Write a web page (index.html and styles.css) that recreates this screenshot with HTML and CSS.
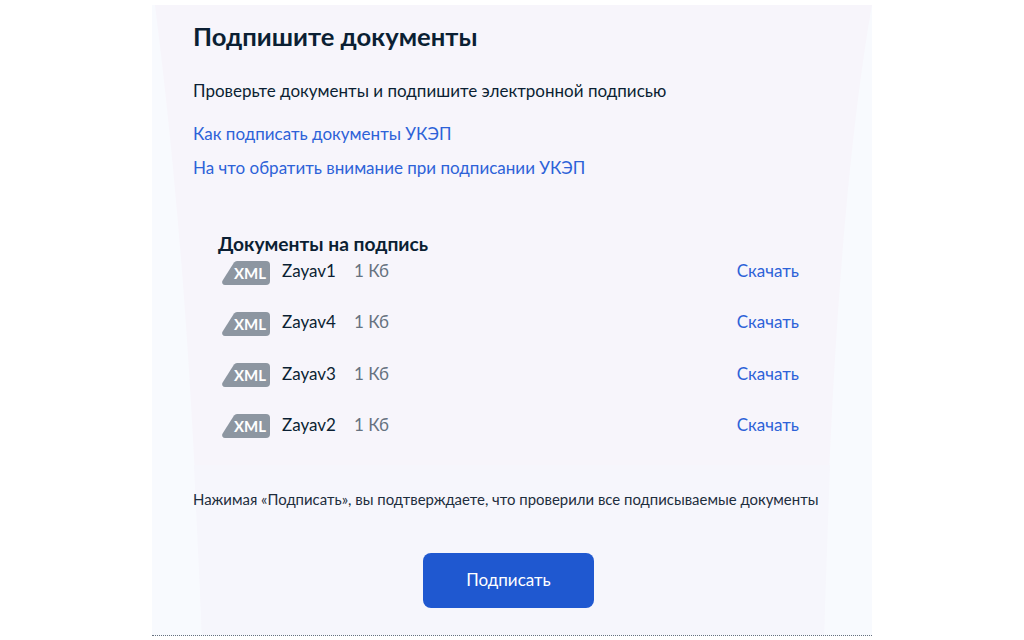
FILE: index.html
```html
<!DOCTYPE html>
<html lang="ru">
<head>
<meta charset="utf-8">
<title>Подпишите документы</title>
<link rel="stylesheet" href="styles.css">
</head>
<body>
<main class="panel">
  <svg class="backdrop" viewBox="0 0 720 630" preserveAspectRatio="none" aria-hidden="true">
    <path class="shape" d="M3 0 C18 120 38 300 50 630 L672 630 C676 430 690 170 720 0 Z"/>
    <path class="shape-low" d="M42 460 L50 630 L672 630 L678 460 Z"/>
  </svg>
  <h1 class="title">Подпишите документы</h1>
  <p class="lead">Проверьте документы и подпишите электронной подписью</p>
  <a class="link link-first">Как подписать документы УКЭП</a>
  <a class="link link-second">На что обратить внимание при подписании УКЭП</a>
  <section class="docs">
    <h2 class="docs-title">Документы на подпись</h2>
    <ul class="doc-list">
      <li class="doc">
        <svg class="badge" viewBox="0 0 48 24"><path d="M15 0H44a4 4 0 0 1 4 4V20a4 4 0 0 1-4 4H3a3 3 0 0 1-2.4-4.6L12 1.5A4 4 0 0 1 15 0Z"/><text x="28" y="17.5">XML</text></svg>
        <span class="doc-name">Zayav1</span><span class="doc-size">1 Кб</span><a class="doc-get">Скачать</a>
      </li>
      <li class="doc">
        <svg class="badge" viewBox="0 0 48 24"><path d="M15 0H44a4 4 0 0 1 4 4V20a4 4 0 0 1-4 4H3a3 3 0 0 1-2.4-4.6L12 1.5A4 4 0 0 1 15 0Z"/><text x="28" y="17.5">XML</text></svg>
        <span class="doc-name">Zayav4</span><span class="doc-size">1 Кб</span><a class="doc-get">Скачать</a>
      </li>
      <li class="doc">
        <svg class="badge" viewBox="0 0 48 24"><path d="M15 0H44a4 4 0 0 1 4 4V20a4 4 0 0 1-4 4H3a3 3 0 0 1-2.4-4.6L12 1.5A4 4 0 0 1 15 0Z"/><text x="28" y="17.5">XML</text></svg>
        <span class="doc-name">Zayav3</span><span class="doc-size">1 Кб</span><a class="doc-get">Скачать</a>
      </li>
      <li class="doc">
        <svg class="badge" viewBox="0 0 48 24"><path d="M15 0H44a4 4 0 0 1 4 4V20a4 4 0 0 1-4 4H3a3 3 0 0 1-2.4-4.6L12 1.5A4 4 0 0 1 15 0Z"/><text x="28" y="17.5">XML</text></svg>
        <span class="doc-name">Zayav2</span><span class="doc-size">1 Кб</span><a class="doc-get">Скачать</a>
      </li>
    </ul>
  </section>
  <p class="note">Нажимая «Подписать», вы подтверждаете, что проверили все подписываемые документы</p>
  <div class="actions"><button class="sign" type="button">Подписать</button></div>
</main>
</body>
</html>
```
FILE: styles.css
```css
* { box-sizing: border-box; }
html, body { margin: 0; height: 640px; overflow: hidden; background: #fff; }
body { padding-top: 5px; font-family: Lato, "Noto Sans", sans-serif; color: #0b1f33; }
.panel {
  position: relative;
  width: 720px;
  height: 631px;
  margin: 0 auto;
  padding: 15px 41px 0;
  background: #f8fafe;
  border-bottom: 1px dotted #66727f;
  display: flex;
  flex-direction: column;
  align-items: flex-start;
}
.backdrop { position: absolute; left: 0; top: 0; width: 720px; height: 630px; }
.shape { fill: #f7f5fb; }
.shape-low { fill: #f6f6fc; }
.title, .lead, .link, .docs, .note, .actions { position: relative; }
.title { margin: 0; font-size: 25.6px; line-height: 32px; font-weight: 700; }
.lead { margin: 27px 0 0; font-size: 17px; line-height: 24px; }
.link { color: #2d62d8; font-size: 17px; line-height: 24px; }
.link-first { margin-top: 19px; }
.link-second { margin-top: 10px; }
.docs { width: 100%; margin-top: 52px; padding-left: 25px; }
.docs-title { margin: 0; font-size: 19.2px; line-height: 24px; font-weight: 700; }
.doc-list { list-style: none; margin: 3px 0 0; padding: 0; display: flex; flex-direction: column; gap: 27.3px; }
.doc { display: flex; align-items: center; height: 24px; font-size: 17px; line-height: 24px; }
.badge { width: 48px; height: 24px; margin: 3px 0 0 4px; flex: none; }
.badge path { fill: #8d96a1; }
.badge text { fill: #fff; font-family: Lato, sans-serif; font-size: 15px; font-weight: 700; text-anchor: middle; }
.doc-name { margin-left: 12px; width: 72px; }
.doc-size { color: #66727f; }
.doc-get { margin-left: auto; margin-right: 32px; color: #2d62d8; }
.note { margin: 52px 0 0; font-size: 14.93px; line-height: 20px; color: #1d2d3d; }
.actions { width: 100%; margin-top: 44px; display: flex; justify-content: center; padding-right: 7px; }
.sign {
  width: 171px;
  height: 55px;
  border: 0;
  border-radius: 8px;
  background: #1f58d0;
  color: #fff;
  font: 17px/24px Lato, sans-serif;
}
```
